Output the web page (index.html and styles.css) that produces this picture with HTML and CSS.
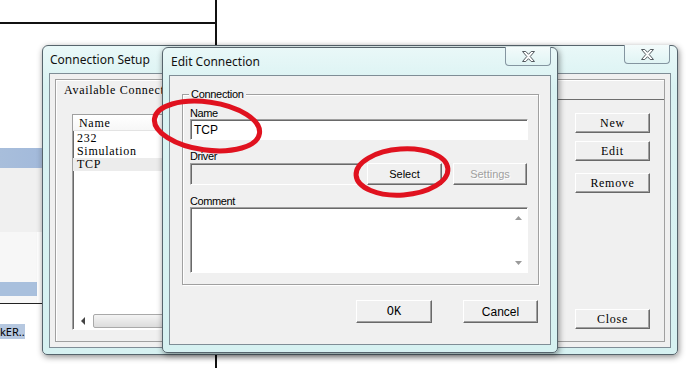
FILE: index.html
```html
<!DOCTYPE html>
<html lang="en">
<head>
    <meta charset="UTF-8">
    <title>Connection Setup</title>
    <link rel="stylesheet" href="styles.css">
</head>
<body>
    <!-- Arka plan uygulama -->
    <div class="bg-hline"></div>
    <div class="bg-vline bg-vline-top"></div>
    <div class="bg-vline bg-vline-bottom"></div>
    <div class="bg-side">
        <div class="side-top"></div>
        <div class="side-sel"></div>
        <div class="side-gray"></div>
        <div class="side-box">
            <div class="side-sel small"></div>
        </div>
        <div class="side-rule"></div>
        <div class="side-text"><span>kER..</span></div>
    </div>

    <!-- Connection Setup -->
    <div class="win setup">
        <div class="titlebar">
            <span class="title">Connection Setup</span>
            <span class="close">
                <svg width="13" height="11" viewBox="0 0 13 11"><polygon points="0.5,0.5 3.8,0.5 6.5,3.3 9.2,0.5 12.5,0.5 8.2,5.5 12.5,10.5 9.2,10.5 6.5,7.7 3.8,10.5 0.5,10.5 4.8,5.5" fill="#fff" stroke="#52595e" stroke-linejoin="round"/></svg>
            </span>
        </div>
        <div class="client">
            <div class="panel">
                <div class="avail">
                    <div class="caption">Available Connections</div>
                    <div class="list">
                        <div class="list-head">Name</div>
                        <div class="list-items">
                            <div class="item">232</div>
                            <div class="item">Simulation</div>
                            <div class="item selected">TCP</div>
                        </div>
                        <div class="hscroll">
                            <span class="arrow-btn">
                                <svg width="5" height="8" viewBox="0 0 5 8"><polygon points="4,0 0,4 4,8" fill="#444"/></svg>
                            </span>
                            <span class="thumb"></span>
                        </div>
                    </div>
                </div>
                <div class="actions">
                    <button class="btn">New</button>
                    <button class="btn">Edit</button>
                    <button class="btn btn-remove">Remove</button>
                    <button class="btn btn-close">Close</button>
                </div>
            </div>
        </div>
    </div>

    <!-- Edit Connection -->
    <div class="win edit">
        <div class="titlebar">
            <span class="title">Edit Connection</span>
            <span class="close">
                <svg width="13" height="11" viewBox="0 0 13 11"><polygon points="0.5,0.5 3.8,0.5 6.5,3.3 9.2,0.5 12.5,0.5 8.2,5.5 12.5,10.5 9.2,10.5 6.5,7.7 3.8,10.5 0.5,10.5 4.8,5.5" fill="#fff" stroke="#52595e" stroke-linejoin="round"/></svg>
            </span>
        </div>
        <div class="client">
            <div class="group">
                <span class="legend">Connection</span>
                <label class="lbl">Name</label>
                <div class="field">TCP</div>
                <label class="lbl gap">Driver</label>
                <div class="driver-row">
                    <div class="field disabled"></div>
                    <button class="btn btn-sans">Select</button>
                    <button class="btn btn-sans btn-off">Settings</button>
                </div>
                <label class="lbl gap">Comment</label>
                <div class="field memo">
                    <div class="vscroll">
                        <svg width="7" height="4" viewBox="0 0 7 4"><polygon points="0,4 3.5,0 7,4" fill="#9a9a9a"/></svg>
                        <svg width="7" height="4" viewBox="0 0 7 4"><polygon points="0,0 3.5,4 7,0" fill="#9a9a9a"/></svg>
                    </div>
                </div>
            </div>
            <div class="dialog-buttons">
                <button class="btn btn-wide btn-ok">OK</button>
                <button class="btn btn-wide btn-sans">Cancel</button>
            </div>
        </div>
    </div>

    <!-- Kırmızı işaretler -->
    <svg class="marks" width="688" height="368" viewBox="0 0 688 368">
        <ellipse cx="207" cy="126" rx="53" ry="24" transform="rotate(8 207 126)" fill="none" stroke="#e0121f" stroke-width="5"/>
        <ellipse cx="402" cy="172" rx="46" ry="23" transform="rotate(-4 402 172)" fill="none" stroke="#e0121f" stroke-width="5"/>
    </svg>
</body>
</html>
```

FILE: styles.css
```css
/* Genel */
* {
    box-sizing: border-box;
}

body {
    margin: 0;
    width: 688px;
    height: 368px;
    position: relative;
    overflow: hidden;
    background: #fff;
    font-family: "Liberation Sans", Arial, sans-serif;
    font-size: 11px;
    color: #000;
}

/* Arka plan */
.bg-hline {
    position: absolute;
    left: 0;
    top: 22px;
    width: 217px;
    height: 2px;
    background: #111;
}

.bg-vline {
    position: absolute;
    left: 215px;
    width: 2px;
    background: #111;
}

.bg-vline-top {
    top: 0;
    height: 48px;
}

.bg-vline-bottom {
    top: 350px;
    height: 18px;
}

.bg-side {
    position: absolute;
    left: 0;
    top: 24px;
    width: 46px;
    height: 344px;
    display: flex;
    flex-direction: column;
}

.side-top {
    height: 124px;
    background: #fff;
}

.side-sel {
    height: 20px;
    background: linear-gradient(90deg, #a8bedb, #a3badb 85%, #c6d6ea);
}

.side-gray {
    height: 64px;
    background: #f0f0f0;
}

.side-box {
    width: 37px;
    height: 71px;
    padding-top: 50px;
    background: #f7f7f7;
}

.side-sel.small {
    height: 14px;
    background: #a9c0dd;
}

.side-rule {
    height: 1px;
    background: #222;
}

.side-text {
    margin-top: 21px;
    font-family: "Noto Sans", sans-serif;
    font-size: 11px;
    line-height: 13px;
}

.side-text span {
    background: #b6c8e0;
}

/* Pencere */
.win {
    position: absolute;
    display: flex;
    flex-direction: column;
    padding: 0 6px 6px;
    border: 1px solid #56646c;
    border-radius: 6px 6px 5px 5px;
    background: linear-gradient(#e9f8f8, #d9f2f2 40px, #d6f1f1);
    box-shadow: 1px 2px 6px rgba(0, 0, 0, 0.45);
}

.setup {
    left: 42px;
    top: 45px;
    width: 636px;
    height: 310px;
}

.edit {
    left: 162px;
    top: 47px;
    width: 396px;
    height: 306px;
    padding-bottom: 7px;
}

.titlebar {
    height: 27px;
    display: flex;
    justify-content: space-between;
    align-items: flex-start;
}

.title {
    padding: 6px 0 0 1px;
    font-family: "Noto Sans", sans-serif;
    font-size: 12px;
    line-height: 16px;
    color: #111;
}

.edit .title {
    padding-left: 2px;
}

.close {
    width: 46px;
    height: 19px;
    margin-top: -1px;
    display: flex;
    align-items: center;
    justify-content: center;
    border: 1px solid #8495a0;
    border-top: none;
    border-radius: 0 0 4px 4px;
    background: linear-gradient(#f3fbfb, #e0f4f4);
}

.setup .close {
    margin-right: 1px;
}

.client {
    flex: 1;
    background: #f0f0f0;
    border: 1px solid #7f8d96;
}

/* Butonlar */
.btn {
    width: 75px;
    height: 20px;
    padding: 0;
    display: flex;
    align-items: center;
    justify-content: center;
    background: #f0f0f0;
    border: 1px solid;
    border-color: #fff #696969 #696969 #fff;
    box-shadow: inset -1px -1px 0 #a0a0a0;
    font-family: "Liberation Serif", serif;
    font-size: 12px;
    letter-spacing: 0.7px;
    color: #000;
}

.btn-sans {
    font-family: "Liberation Sans", Arial, sans-serif;
    font-size: 11px;
    letter-spacing: 0;
}

.btn-ok {
    font-family: "Liberation Mono", monospace;
    letter-spacing: 0;
}

.btn-off {
    color: #a0a0a0;
    text-shadow: 1px 1px 0 #fff;
}

/* Connection Setup */
.setup .client {
    padding: 5px;
    display: flex;
}

.panel {
    flex: 1;
    display: flex;
    border: 1px solid #a0a0a0;
    box-shadow: inset 1px 1px 0 #fff;
}

.avail {
    flex: 1;
    display: flex;
    flex-direction: column;
    padding: 4px 8px 11px 8px;
}

.caption {
    font-family: "Liberation Serif", serif;
    font-size: 12px;
    letter-spacing: 0.7px;
    line-height: 12px;
}

.list {
    flex: 1;
    margin: 18px 0 0 8px;
    display: flex;
    flex-direction: column;
    background: #fff;
    border: 1px solid;
    border-color: #a0a0a0 #fff #fff #a0a0a0;
    box-shadow: inset 1px 1px 0 #696969;
    font-family: "Liberation Serif", serif;
    font-size: 12px;
    letter-spacing: 0.7px;
}

.list-head {
    height: 16px;
    padding: 2px 0 0 6px;
    line-height: 13px;
    border-bottom: 1px solid #e3e3e3;
    background: linear-gradient(#fff, #f7f7f7);
}

.list-items {
    padding-top: 1px;
}

.item {
    height: 13px;
    line-height: 13px;
    padding-left: 4px;
}

.item.selected {
    background: #ececec;
}

.hscroll {
    margin-top: auto;
    height: 16px;
    display: flex;
    padding: 0 0 1px 1px;
}

.arrow-btn {
    width: 18px;
    display: flex;
    align-items: center;
    justify-content: center;
}

.thumb {
    flex: 1;
    margin: 1px 0 0 1px;
    border: 1px solid #a9a9a9;
    border-radius: 2px;
    background: linear-gradient(#f4f4f4, #dcdcdc);
}

.actions {
    width: 107px;
    margin-top: 19px;
    display: flex;
    flex-direction: column;
    gap: 8px;
    padding: 13px 0 12px 17px;
    border-top: 1px solid #6d6d6d;
    border-left: 1px solid #6d6d6d;
}

.btn-remove {
    margin-top: 4px;
}

.btn-close {
    margin-top: auto;
}

/* Edit Connection */
.edit .client {
    padding: 18px 11px 0 12px;
    display: flex;
    flex-direction: column;
}

.group {
    position: relative;
    display: flex;
    flex-direction: column;
    height: 191px;
    padding: 12px 10px 11px 7px;
    border: 1px solid #a0a0a0;
    box-shadow: 1px 1px 0 #fff, inset 1px 1px 0 #fff;
}

.legend {
    position: absolute;
    left: 6px;
    top: -7px;
    padding: 0 2px;
    background: #f0f0f0;
    line-height: 13px;
    letter-spacing: -0.3px;
}

.lbl {
    height: 12px;
    line-height: 12px;
    letter-spacing: -0.4px;
}

.lbl.gap {
    margin-top: 10px;
}

.field {
    height: 21px;
    display: flex;
    align-items: center;
    padding: 0 3px;
    background: #fff;
    border: 1px solid;
    border-color: #a0a0a0 #fff #fff #a0a0a0;
    box-shadow: inset 1px 1px 0 #696969;
    font-size: 12px;
}

.field.disabled {
    flex: 1;
    height: 22px;
    background: #f0f0f0;
}

.driver-row {
    height: 22px;
    margin-top: 1px;
    display: flex;
    gap: 8px;
    padding-right: 1px;
}

.driver-row .btn {
    height: 22px;
}

.driver-row .btn-off {
    width: 74px;
    margin-left: 3px;
}

.field.memo {
    height: 66px;
    justify-content: flex-end;
    align-items: stretch;
    padding: 0;
}

.vscroll {
    width: 17px;
    display: flex;
    flex-direction: column;
    justify-content: space-between;
    align-items: center;
    padding: 8px 0 7px;
}

.dialog-buttons {
    margin-top: 15px;
    display: flex;
    justify-content: flex-end;
    gap: 31px;
    padding-right: 1px;
}

.btn-wide {
    width: 76px;
    height: 23px;
}

.btn-wide.btn-sans {
    width: 75px;
    font-size: 12px;
}

.marks {
    position: absolute;
    left: 0;
    top: 0;
    pointer-events: none;
}
```
